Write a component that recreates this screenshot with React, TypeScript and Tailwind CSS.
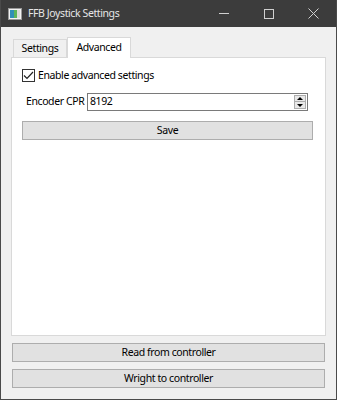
const font = { fontFamily: '"Noto Sans", "Liberation Sans", sans-serif' };

function WinButton({ children }: { children: React.ReactNode }) {
  return (
    <button className="h-[19px] w-full border border-[#adadad] bg-[#e1e1e1] text-[10.5px] leading-none tracking-[-0.4px] text-black">
      {children}
    </button>
  );
}

export default function App() {
  return (
    <div
      className="flex h-[400px] w-[337px] flex-col border-x border-b border-[#4a4a4a] bg-[#f0f0f0] tracking-[-0.4px]"
      style={font}
    >
      {/* title bar */}
      <div className="flex h-[27px] shrink-0 items-center bg-[#3c3c3c] text-[10.5px] text-white">
        <svg width="14" height="12" viewBox="0 0 14 12" className="ml-[7px] mr-[6px]">
          <rect x="0.5" y="0.5" width="13" height="11" fill="#f2f2f2" stroke="#9a9a9a" />
          <rect x="2" y="2" width="4" height="8" fill="#2f8fb8" />
          <rect x="6" y="2" width="3" height="8" fill="#5cb55c" />
          <rect x="9" y="2" width="3" height="8" fill="#dcdcdc" />
        </svg>
        <span className="text-[#e6e6e6]">FFB Joystick Settings</span>
        <div className="ml-auto flex h-full items-center">
          <div className="flex h-full w-[45px] items-center justify-center">
            <div className="h-px w-[10px] bg-[#d0d0d0]" />
          </div>
          <div className="flex h-full w-[45px] items-center justify-center">
            <div className="h-[10px] w-[10px] border border-[#d0d0d0]" />
          </div>
          <div className="flex h-full w-[45px] items-center justify-center">
            <svg width="11" height="11" viewBox="0 0 11 11">
              <path d="M0.5 0.5 L10.5 10.5 M10.5 0.5 L0.5 10.5" stroke="#d0d0d0" strokeWidth="1" />
            </svg>
          </div>
        </div>
      </div>

      {/* tab widget */}
      <div className="mx-[10px] mt-[10px] flex flex-1 flex-col">
        <div className="relative z-10 flex h-[20px] items-end pl-[2px] text-[10.5px]">
          <div className="flex h-[18px] w-[54px] items-center justify-center border border-b-0 border-[#d9d9d9] bg-[#f0f0f0]">
            Settings
          </div>
          <div className="-mb-px flex h-[21px] w-[64px] items-center justify-center border border-b-0 border-[#d9d9d9] bg-white">
            Advanced
          </div>
        </div>
        <div className="flex flex-1 flex-col border border-[#d9d9d9] bg-white pl-[10px] pr-[12px] pt-[10px] text-[10.5px]">
          <label className="flex items-center gap-[3px]">
            <span className="flex h-[13px] w-[13px] items-center justify-center border border-[#333] bg-white">
              <svg width="11" height="9" viewBox="0 0 11 9">
                <path d="M1 4.5 L4 7.5 L10 1" stroke="#222" strokeWidth="1.2" fill="none" />
              </svg>
            </span>
            <span>Enable advanced settings</span>
          </label>
          <div className="mt-[9px] flex items-center pl-[4px]">
            <span className="w-[61px] whitespace-nowrap">Encoder CPR</span>
            <div className="mr-[5px] flex h-[18px] flex-1 items-center border border-[#7a7a7a] bg-white pl-[2px]">
              <span className="flex-1">8192</span>
              <div className="mr-px flex h-[14px] w-[12px] flex-col border border-[#adadad] bg-[#e8e8e8]">
                <div className="flex flex-1 items-center justify-center border-b border-[#adadad]">
                  <div className="h-0 w-0 border-x-[3px] border-b-[3px] border-x-transparent border-b-black" />
                </div>
                <div className="flex flex-1 items-center justify-center">
                  <div className="h-0 w-0 border-x-[3px] border-t-[3px] border-x-transparent border-t-black" />
                </div>
              </div>
            </div>
          </div>
          <div className="mt-[10px]">
            <WinButton>Save</WinButton>
          </div>
        </div>
      </div>

      <div className="mx-[11px] mb-[11px] mt-[7px] flex flex-col gap-[7px]">
        <WinButton>Read from controller</WinButton>
        <WinButton>Wright to controller</WinButton>
      </div>
    </div>
  );
}
